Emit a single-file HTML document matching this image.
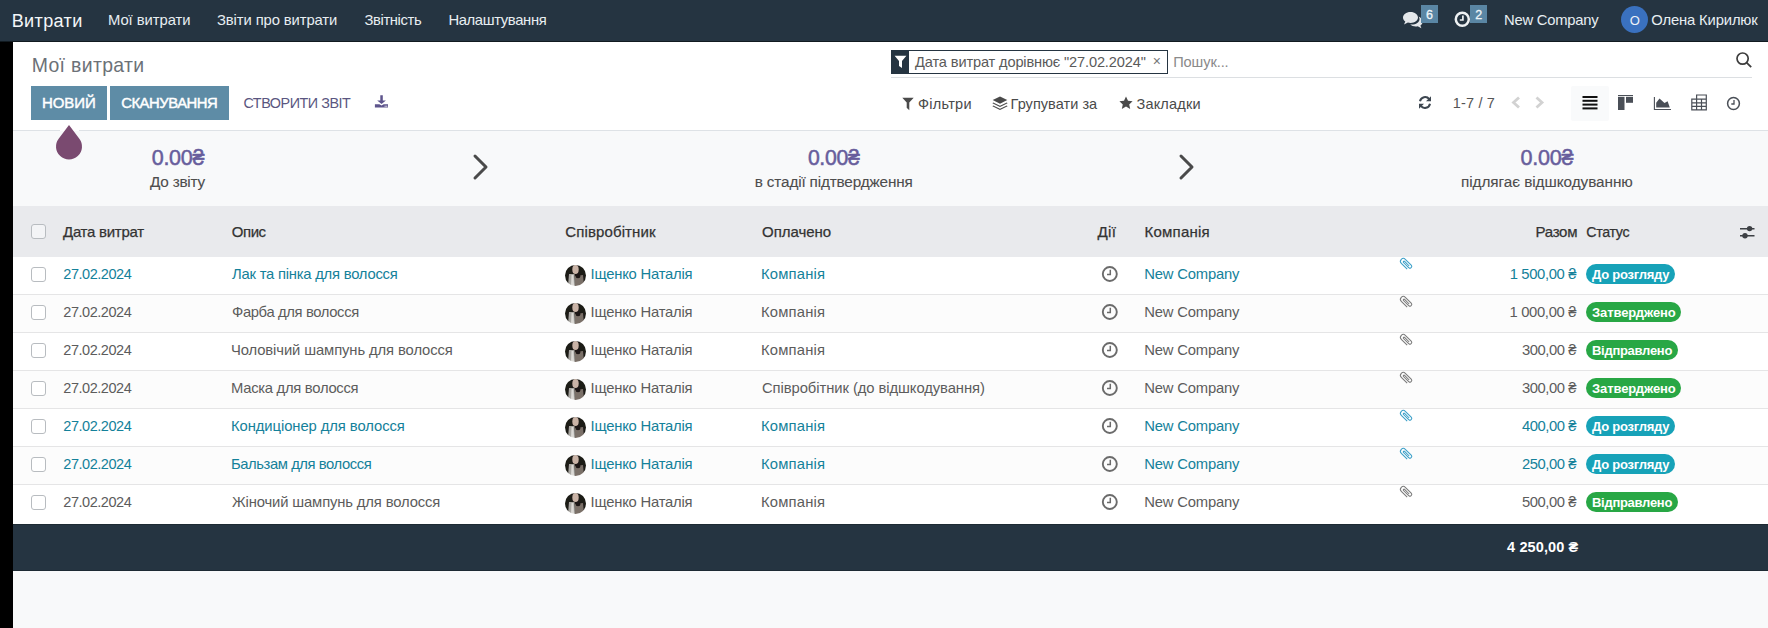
<!DOCTYPE html>
<html><head><meta charset="utf-8">
<style>
*{box-sizing:border-box;margin:0;padding:0}
html,body{width:1768px;height:628px;overflow:hidden;background:#000;font-family:"Liberation Sans",sans-serif;position:relative}
.a{position:absolute;white-space:nowrap;line-height:1}
.ctr{text-align:center}
.ic{position:absolute;overflow:visible}
#nav{position:absolute;left:0;top:0;width:1768px;height:42px;background:#253441}
#main{position:absolute;left:13px;top:42px;width:1755px;height:586px;background:#fff}
.nv{color:#e8eef2;font-size:14.3px}
.nb{position:absolute;top:5px;width:17px;height:18px;background:#5a86a4}
.btn{position:absolute;background:#5e8ca6}
.hd{color:#333;-webkit-text-stroke:0.25px #333}
.cell{color:#5c5c5c}
.lnk{color:#14819a}
.badge{position:absolute;height:20px;border-radius:10px;left:1586px}
.bi{background:#17a2b8}
.bs{background:#28a745}
.cb{position:absolute;left:31px;width:15px;height:15px;border:1px solid #b8bcc0;border-radius:3px;background:#fff}
.row{position:absolute;left:13px;width:1755px;height:38px;border-bottom:1px solid #e5e5e6;background:#fff}
.row.odd{background:#fcfcfc}
.av{position:absolute;left:565px;width:21px;height:21px;border-radius:50%;background:radial-gradient(circle at 45% 55%,#bdb7ae 0,#8f8a84 30%,#3a3330 60%,#1a1614 100%)}

</style></head><body>
<div id="nav"></div><div style="position:absolute;left:0;top:41px;width:1768px;height:1px;background:#111a20"></div>
<span class="a " style="left:11.7px;top:11.8px;font-size:18.07px;letter-spacing:0.354px;color:#f4f6f8">Витрати</span>
<span class="a nv" style="left:108px;top:12.8px;font-size:14.8px;letter-spacing:-0.056px;">Мої витрати</span>
<span class="a nv" style="left:217px;top:12.8px;font-size:14.8px;letter-spacing:-0.102px;">Звіти про витрати</span>
<span class="a nv" style="left:364.5px;top:12.8px;font-size:14.8px;letter-spacing:-0.387px;">Звітність</span>
<span class="a nv" style="left:448.4px;top:12.8px;font-size:14.8px;letter-spacing:-0.36px;">Налаштування</span>
<svg class="ic" style="left:1402px;top:11px" width="21" height="18" viewBox="0 0 21 18">
<path d="M8.5 1C4.1 1 1 3.5 1 6.6c0 1.6.9 3 2.3 4L2 13.6l3.9-2c.8.2 1.7.4 2.6.4 4.4 0 7.5-2.5 7.5-5.4S12.9 1 8.5 1z" fill="#e4e7ea"/>
<path d="M16.6 5.6c.6.7.9 1.5.9 2.4 0 3.2-3.4 5.6-7.8 5.6-.5 0-1 0-1.5-.1 1.3 1.2 3.3 2 5.5 2 .7 0 1.4-.1 2-.3l3.7 2-1-2.7c1.4-1 2.3-2.3 2.3-3.8 0-2-1.6-3.8-4.1-5.1z" fill="#e4e7ea"/>
</svg>
<div class="nb" style="left:1421px"></div>
<span class="a " style="left:1425.95px;top:9.1px;font-size:12.5px;color:#eef4f8;-webkit-text-stroke:0.3px #eef4f8">6</span>
<svg class="ic" style="left:1454px;top:10px" width="17" height="18" viewBox="0 0 17 18">
<circle cx="8.3" cy="9.3" r="6.5" fill="none" stroke="#eef1f3" stroke-width="2.5"/>
<path d="M8.9 5.5v4.5H5.8" fill="none" stroke="#eef1f3" stroke-width="1.7"/>
</svg>
<div class="nb" style="left:1470px"></div>
<span class="a " style="left:1475.3px;top:9.1px;font-size:12.5px;color:#eef4f8;-webkit-text-stroke:0.3px #eef4f8">2</span>
<span class="a nv" style="left:1504px;top:12.7px;font-size:14.8px;letter-spacing:-0.244px;">New Company</span>
<div style="position:absolute;left:1621px;top:6px;width:27px;height:27px;border-radius:50%;background:#3a71bf"></div>
<span class="a " style="left:1629.75px;top:13.7px;font-size:13px;color:#eef3f8">О</span>
<span class="a nv" style="left:1651.3px;top:12.7px;font-size:14.8px;letter-spacing:-0.152px;">Олена Кирилюк</span>
<div id="main"></div>
<span class="a " style="left:31.7px;top:56px;font-size:19.42px;letter-spacing:0.356px;color:#6c7177">Мої витрати</span>
<div style="position:absolute;left:891px;top:50px;width:277px;height:24px;border:1px solid #253441;background:#fff"></div>
<div style="position:absolute;left:891px;top:50px;width:18px;height:24px;background:#253441"></div>
<svg class="ic" style="left:894px;top:55px" width="13" height="14" viewBox="0 0 13 14">
<path d="M0.6 0.8h11.8L8 6v7L5 11V6z" fill="#fff"/></svg>
<span class="a " style="left:915.1px;top:54.9px;font-size:14.6px;letter-spacing:-0.14px;color:#5a5a5a">Дата витрат дорівнює "27.02.2024"</span>
<span class="a " style="left:1152.7px;top:54px;font-size:14px;color:#777">×</span>
<span class="a " style="left:1173.2px;top:54.9px;font-size:14.6px;letter-spacing:-0.101px;color:#8a8a8a">Пошук...</span>
<div style="position:absolute;left:891px;top:77px;width:861px;height:1px;background:#dcdfe2"></div>
<svg class="ic" style="left:1735px;top:51px" width="18" height="18" viewBox="0 0 18 18">
<circle cx="7.6" cy="7.6" r="5.6" fill="none" stroke="#3d3d3d" stroke-width="1.7"/>
<path d="M11.6 11.6l4.6 4.6" stroke="#3d3d3d" stroke-width="1.8"/></svg>
<div class="btn" style="left:31px;top:86px;width:76px;height:34px"></div>
<span class="a " style="left:42px;top:95px;font-size:15px;letter-spacing:-0.072px;color:#fff;-webkit-text-stroke:0.45px #fff">НОВИЙ</span>
<div class="btn" style="left:110px;top:86px;width:119px;height:34px"></div>
<span class="a " style="left:121.2px;top:96px;font-size:14.83px;letter-spacing:-0.463px;color:#fff;-webkit-text-stroke:0.45px #fff">СКАНУВАННЯ</span>
<span class="a " style="left:243.4px;top:96px;font-size:14.36px;letter-spacing:-0.455px;color:#5a5680">СТВОРИТИ ЗВІТ</span>
<svg class="ic" style="left:374px;top:94px" width="15" height="14" viewBox="0 0 15 14">
<path d="M6.3 1.2h2.5v5.2h3.1L7.55 10.1 3.2 6.4h3.1z" fill="#5d548c"/>
<path d="M0.9 10.2H5.4L7.55 11.4 9.7 10.2H14V13.4H0.9z" fill="#5d548c"/>
<rect x="10.6" y="11.7" width="1.1" height="1" fill="#fff"/><rect x="12.2" y="11.7" width="1.1" height="1" fill="#fff"/></svg>
<svg class="ic" style="left:902px;top:97px" width="12" height="14" viewBox="0 0 12 14">
<path d="M0.3 0.8h11.4L7.3 5.6v7.6L4.7 10.8V5.6z" fill="#4a4a4a"/></svg>
<span class="a " style="left:918px;top:96.5px;font-size:14.5px;letter-spacing:0.261px;color:#4a4a4a">Фільтри</span>
<svg class="ic" style="left:992px;top:96px" width="16" height="15" viewBox="0 0 16 15">
<path d="M8 0.5l7.3 3.6L8 7.7 0.7 4.1z" fill="#4a4a4a"/>
<path d="M1.2 6.4L8 9.8l6.8-3.4 0.8 0.9L8 11.1 0.4 7.3z" fill="#4a4a4a"/>
<path d="M1.2 9.4L8 12.8l6.8-3.4 0.8 0.9L8 14.1 0.4 10.3z" fill="#4a4a4a"/></svg>
<span class="a " style="left:1010.6px;top:96.5px;font-size:14.5px;letter-spacing:0.046px;color:#4a4a4a">Групувати за</span>
<svg class="ic" style="left:1119px;top:96px" width="14" height="14" viewBox="0 0 14 14">
<path d="M7 0.5l2 4.3 4.6.5-3.4 3.1 1 4.6L7 10.6 2.8 13l1-4.6L0.4 5.3 5 4.8z" fill="#4a4a4a"/></svg>
<span class="a " style="left:1136.5px;top:96.5px;font-size:14.5px;letter-spacing:0.177px;color:#4a4a4a">Закладки</span>
<svg class="ic" style="left:1418px;top:95px" width="14" height="15" viewBox="0 0 14 15">
<path d="M2 6.3A5.2 5.2 0 0 1 11.2 4.1" fill="none" stroke="#3d4650" stroke-width="2"/>
<path d="M13 1.2v5h-5z" fill="#3d4650"/>
<path d="M12 8.7A5.2 5.2 0 0 1 2.8 10.9" fill="none" stroke="#3d4650" stroke-width="2"/>
<path d="M1 13.8v-5h5z" fill="#3d4650"/></svg>
<span class="a " style="left:1452.7px;top:95.7px;font-size:14.5px;letter-spacing:0.176px;color:#555">1-7 / 7</span>
<svg class="ic" style="left:1510px;top:96px" width="36" height="13" viewBox="0 0 36 13">
<path d="M9 1.5L3.5 6.5 9 11.5" fill="none" stroke="#d2d2d2" stroke-width="2.8"/>
<path d="M26.5 1.5L32 6.5 26.5 11.5" fill="none" stroke="#d2d2d2" stroke-width="2.8"/></svg>
<div style="position:absolute;left:1571px;top:86px;width:38px;height:35px;background:#f9fafb;border-radius:2px"></div>
<svg class="ic" style="left:1582px;top:95px" width="16" height="15" viewBox="0 0 16 15">
<rect x="0.5" y="1" width="15" height="2" fill="#111"/><rect x="0.5" y="4.8" width="15" height="2" fill="#111"/>
<rect x="0.5" y="8.6" width="15" height="2" fill="#111"/><rect x="0.5" y="12.4" width="15" height="2" fill="#111"/></svg>
<svg class="ic" style="left:1617px;top:94px" width="17" height="17" viewBox="0 0 17 17">
<rect x="1" y="1" width="15" height="1" fill="#4a4f57"/><rect x="1" y="2.8" width="6.5" height="13.2" fill="#4a4f57"/>
<rect x="9" y="2.8" width="7" height="6" fill="#4a4f57"/></svg>
<svg class="ic" style="left:1653px;top:96px" width="19" height="15" viewBox="0 0 19 15">
<path d="M1.4 1V13.5H18" fill="none" stroke="#4a4f57" stroke-width="1.1"/>
<path d="M3.2 11.6V6.8L6.5 2.4 11.5 7.1 14.6 5.2 16.8 11.6z" fill="#4a4f57"/></svg>
<svg class="ic" style="left:1691px;top:94px" width="17" height="17" viewBox="0 0 17 17">
<path d="M5.6 5.2V1H15.3V5.2M0.8 5.2H15.3V15.8H0.8zM0.8 8.8H15.3M0.8 12.3H15.3M5.6 5.2V15.8M10.5 5.2V15.8" fill="none" stroke="#4a4f57" stroke-width="1.2"/></svg>
<svg class="ic" style="left:1726px;top:96px" width="15" height="15" viewBox="0 0 15 15">
<circle cx="7.5" cy="7.5" r="5.9" fill="none" stroke="#4a4f57" stroke-width="1.5"/>
<path d="M8 4v4H5.3" fill="none" stroke="#4a4f57" stroke-width="1.3"/></svg>
<div style="position:absolute;left:13px;top:130px;width:1755px;height:1px;background:#dee2e6"></div>
<div style="position:absolute;left:13px;top:131px;width:1755px;height:75px;background:#f8f9fa"></div>
<div style="position:absolute;left:60px;top:130px;width:19px;height:1px;background:#fff"></div>
<svg class="ic" style="left:55px;top:124px" width="28" height="37" viewBox="0 0 28 37">
<path d="M14 1L24.35 14.64A13 13 0 1 1 3.65 14.64Z" fill="#7a4a70"/></svg>
<span class="a " style="left:151.7px;top:148.2px;font-size:21.53px;letter-spacing:-0.269px;color:#675d9c;-webkit-text-stroke:0.5px #675d9c">0.00₴</span>
<span class="a " style="left:807.9px;top:147.2px;font-size:21.21px;letter-spacing:-0.317px;color:#675d9c;-webkit-text-stroke:0.5px #675d9c">0.00₴</span>
<span class="a " style="left:1520.6px;top:147.2px;font-size:21.57px;letter-spacing:-0.267px;color:#675d9c;-webkit-text-stroke:0.5px #675d9c">0.00₴</span>
<span class="a " style="left:150px;top:174px;font-size:15.3px;letter-spacing:-0.215px;color:#4d4d4d;-webkit-text-stroke:0.1px #4d4d4d">До звіту</span>
<span class="a " style="left:754.8px;top:174px;font-size:15.3px;letter-spacing:-0.156px;color:#4d4d4d;-webkit-text-stroke:0.1px #4d4d4d">в стадії підтвердження</span>
<span class="a " style="left:1461px;top:174px;font-size:15.3px;letter-spacing:-0.048px;color:#4d4d4d;-webkit-text-stroke:0.1px #4d4d4d">підлягає відшкодуванню</span>
<svg class="ic" style="left:473px;top:154px" width="16" height="26" viewBox="0 0 16 26">
<path d="M2 2L13 13 2 24" fill="none" stroke="#4a4a4a" stroke-width="3" stroke-linecap="round" stroke-linejoin="round"/></svg>
<svg class="ic" style="left:1179px;top:154px" width="16" height="26" viewBox="0 0 16 26">
<path d="M2 2L13 13 2 24" fill="none" stroke="#4a4a4a" stroke-width="3" stroke-linecap="round" stroke-linejoin="round"/></svg>
<div style="position:absolute;left:13px;top:206px;width:1755px;height:51px;background:#e9eaed"></div>
<div class="cb" style="top:224px;background:#f3f4f6"></div>
<span class="a hd" style="left:63px;top:224px;font-size:15px;letter-spacing:-0.276px;">Дата витрат</span>
<span class="a hd" style="left:231.8px;top:224px;font-size:14.98px;letter-spacing:-0.437px;">Опис</span>
<span class="a hd" style="left:565.3px;top:224px;font-size:15px;letter-spacing:0.118px;">Співробітник</span>
<span class="a hd" style="left:762.1px;top:224px;font-size:15px;letter-spacing:-0.042px;">Оплачено</span>
<span class="a hd" style="left:1097.5px;top:224px;font-size:15.16px;letter-spacing:0.334px;">Дії</span>
<span class="a hd" style="left:1144.6px;top:224px;font-size:15px;letter-spacing:0.204px;">Компанія</span>
<span class="a hd" style="left:1535.5px;top:224px;font-size:15px;letter-spacing:-0.258px;">Разом</span>
<span class="a hd" style="left:1586.2px;top:225px;font-size:14.23px;letter-spacing:-0.328px;">Статус</span>
<svg class="ic" style="left:1739px;top:225px" width="16" height="15" viewBox="0 0 16 15">
<path d="M1 3.8h14.5M1 10.8h14.5" stroke="#3d4045" stroke-width="1.4"/>
<circle cx="10.6" cy="3.6" r="2.7" fill="#3d4045"/><circle cx="6" cy="10.8" r="2.7" fill="#3d4045"/></svg>
<div class="row" style="top:257px;"></div>
<div class="cb" style="top:267px"></div>
<span class="a cell lnk" style="left:63.3px;top:267px;font-size:14.51px;letter-spacing:-0.456px;">27.02.2024</span>
<span class="a cell lnk" style="left:232px;top:267px;font-size:14.8px;letter-spacing:-0.222px;">Лак та пінка для волосся</span>
<svg class="ic" style="left:565px;top:265px" width="21" height="21" viewBox="0 0 21 21"><defs><filter id="bl0"><feGaussianBlur stdDeviation="0.6"/></filter><clipPath id="cp0"><circle cx="10.5" cy="10.5" r="10.5"/></clipPath></defs>
<g clip-path="url(#cp0)" filter="url(#bl0)"><rect width="21" height="21" fill="#1e1a18"/>
<ellipse cx="10.5" cy="4.5" rx="3.2" ry="4.5" fill="#c9b3a6"/>
<path d="M4 9 L9.5 9 L10 21 L3 21 Z" fill="#a9a7a2"/>
<path d="M6.5 10 L8.5 10 L9 21 L6 21 Z" fill="#dcdad6"/>
<path d="M10 11 L18 10 L19 21 L10 21 Z" fill="#7a7068"/>
<ellipse cx="13" cy="11" rx="2.5" ry="2.2" fill="#1a1514"/>
</g></svg>
<span class="a cell lnk" style="left:590.5px;top:267px;font-size:14.8px;letter-spacing:-0.212px;">Іщенко Наталія</span>
<span class="a cell lnk" style="left:761px;top:267px;font-size:14.8px;letter-spacing:0.183px;">Компанія</span>
<svg class="ic" style="left:1101px;top:265px" width="18" height="18" viewBox="0 0 18 18">
<circle cx="8.8" cy="9" r="7" fill="none" stroke="#6b6b6b" stroke-width="1.9"/>
<path d="M9.3 4.8v4.7H6" fill="none" stroke="#6b6b6b" stroke-width="1.5"/></svg>
<span class="a cell lnk" style="left:1144.3px;top:267px;font-size:14.8px;letter-spacing:-0.194px;">New Company</span>
<svg class="ic" style="left:1399px;top:257px" width="14" height="14" viewBox="0 0 14 14">
<path d="M8.2 12.2L2.3 6.3C1.2 5.2 1.2 3.4 2.3 2.3s2.9-1.1 4 0l5.9 5.9c.7.7.7 1.8 0 2.5s-1.8.7-2.5 0L4.5 5.5c-.3-.3-.3-.8 0-1.1s.8-.3 1.1 0l4.6 4.6" fill="none" stroke="#3a9fc8" stroke-width="1.05"/></svg>
<span class="a cell lnk" style="left:1509.7px;top:267px;font-size:14.8px;letter-spacing:-0.357px;">1 500,00 ₴</span>
<div class="badge bi" style="top:264px;width:89px"></div>
<span class="a " style="left:1592px;top:267.7px;font-size:13px;letter-spacing:-0.229px;font-weight:700;color:#fff">До розгляду</span>
<div class="row odd" style="top:295px;"></div>
<div class="cb" style="top:305px"></div>
<span class="a cell" style="left:63.3px;top:305px;font-size:14.51px;letter-spacing:-0.456px;">27.02.2024</span>
<span class="a cell" style="left:232px;top:305px;font-size:14.8px;letter-spacing:-0.363px;">Фарба для волосся</span>
<svg class="ic" style="left:565px;top:303px" width="21" height="21" viewBox="0 0 21 21"><defs><filter id="bl1"><feGaussianBlur stdDeviation="0.6"/></filter><clipPath id="cp1"><circle cx="10.5" cy="10.5" r="10.5"/></clipPath></defs>
<g clip-path="url(#cp1)" filter="url(#bl1)"><rect width="21" height="21" fill="#1e1a18"/>
<ellipse cx="10.5" cy="4.5" rx="3.2" ry="4.5" fill="#c9b3a6"/>
<path d="M4 9 L9.5 9 L10 21 L3 21 Z" fill="#a9a7a2"/>
<path d="M6.5 10 L8.5 10 L9 21 L6 21 Z" fill="#dcdad6"/>
<path d="M10 11 L18 10 L19 21 L10 21 Z" fill="#7a7068"/>
<ellipse cx="13" cy="11" rx="2.5" ry="2.2" fill="#1a1514"/>
</g></svg>
<span class="a cell" style="left:590.5px;top:305px;font-size:14.8px;letter-spacing:-0.212px;">Іщенко Наталія</span>
<span class="a cell" style="left:761px;top:305px;font-size:14.8px;letter-spacing:0.183px;">Компанія</span>
<svg class="ic" style="left:1101px;top:303px" width="18" height="18" viewBox="0 0 18 18">
<circle cx="8.8" cy="9" r="7" fill="none" stroke="#6b6b6b" stroke-width="1.9"/>
<path d="M9.3 4.8v4.7H6" fill="none" stroke="#6b6b6b" stroke-width="1.5"/></svg>
<span class="a cell" style="left:1144.3px;top:305px;font-size:14.8px;letter-spacing:-0.194px;">New Company</span>
<svg class="ic" style="left:1399px;top:295px" width="14" height="14" viewBox="0 0 14 14">
<path d="M8.2 12.2L2.3 6.3C1.2 5.2 1.2 3.4 2.3 2.3s2.9-1.1 4 0l5.9 5.9c.7.7.7 1.8 0 2.5s-1.8.7-2.5 0L4.5 5.5c-.3-.3-.3-.8 0-1.1s.8-.3 1.1 0l4.6 4.6" fill="none" stroke="#7a7a7a" stroke-width="1.05"/></svg>
<span class="a cell" style="left:1509.5px;top:305px;font-size:14.8px;letter-spacing:-0.334px;">1 000,00 ₴</span>
<div class="badge bs" style="top:302px;width:95px"></div>
<span class="a " style="left:1592px;top:305.7px;font-size:13px;letter-spacing:-0.099px;font-weight:700;color:#fff">Затверджено</span>
<div class="row" style="top:333px;"></div>
<div class="cb" style="top:343px"></div>
<span class="a cell" style="left:63.3px;top:343px;font-size:14.51px;letter-spacing:-0.456px;">27.02.2024</span>
<span class="a cell" style="left:231px;top:343px;font-size:14.8px;letter-spacing:-0.107px;">Чоловічий шампунь для волосся</span>
<svg class="ic" style="left:565px;top:341px" width="21" height="21" viewBox="0 0 21 21"><defs><filter id="bl2"><feGaussianBlur stdDeviation="0.6"/></filter><clipPath id="cp2"><circle cx="10.5" cy="10.5" r="10.5"/></clipPath></defs>
<g clip-path="url(#cp2)" filter="url(#bl2)"><rect width="21" height="21" fill="#1e1a18"/>
<ellipse cx="10.5" cy="4.5" rx="3.2" ry="4.5" fill="#c9b3a6"/>
<path d="M4 9 L9.5 9 L10 21 L3 21 Z" fill="#a9a7a2"/>
<path d="M6.5 10 L8.5 10 L9 21 L6 21 Z" fill="#dcdad6"/>
<path d="M10 11 L18 10 L19 21 L10 21 Z" fill="#7a7068"/>
<ellipse cx="13" cy="11" rx="2.5" ry="2.2" fill="#1a1514"/>
</g></svg>
<span class="a cell" style="left:590.5px;top:343px;font-size:14.8px;letter-spacing:-0.212px;">Іщенко Наталія</span>
<span class="a cell" style="left:761px;top:343px;font-size:14.8px;letter-spacing:0.183px;">Компанія</span>
<svg class="ic" style="left:1101px;top:341px" width="18" height="18" viewBox="0 0 18 18">
<circle cx="8.8" cy="9" r="7" fill="none" stroke="#6b6b6b" stroke-width="1.9"/>
<path d="M9.3 4.8v4.7H6" fill="none" stroke="#6b6b6b" stroke-width="1.5"/></svg>
<span class="a cell" style="left:1144.3px;top:343px;font-size:14.8px;letter-spacing:-0.194px;">New Company</span>
<svg class="ic" style="left:1399px;top:333px" width="14" height="14" viewBox="0 0 14 14">
<path d="M8.2 12.2L2.3 6.3C1.2 5.2 1.2 3.4 2.3 2.3s2.9-1.1 4 0l5.9 5.9c.7.7.7 1.8 0 2.5s-1.8.7-2.5 0L4.5 5.5c-.3-.3-.3-.8 0-1.1s.8-.3 1.1 0l4.6 4.6" fill="none" stroke="#7a7a7a" stroke-width="1.05"/></svg>
<span class="a cell" style="left:1522px;top:343px;font-size:14.79px;letter-spacing:-0.445px;">300,00 ₴</span>
<div class="badge bs" style="top:340px;width:91.5px"></div>
<span class="a " style="left:1592px;top:343.7px;font-size:13px;letter-spacing:-0.286px;font-weight:700;color:#fff">Відправлено</span>
<div class="row odd" style="top:371px;"></div>
<div class="cb" style="top:381px"></div>
<span class="a cell" style="left:63.3px;top:381px;font-size:14.51px;letter-spacing:-0.456px;">27.02.2024</span>
<span class="a cell" style="left:231px;top:381px;font-size:14.8px;letter-spacing:-0.28px;">Маска для волосся</span>
<svg class="ic" style="left:565px;top:379px" width="21" height="21" viewBox="0 0 21 21"><defs><filter id="bl3"><feGaussianBlur stdDeviation="0.6"/></filter><clipPath id="cp3"><circle cx="10.5" cy="10.5" r="10.5"/></clipPath></defs>
<g clip-path="url(#cp3)" filter="url(#bl3)"><rect width="21" height="21" fill="#1e1a18"/>
<ellipse cx="10.5" cy="4.5" rx="3.2" ry="4.5" fill="#c9b3a6"/>
<path d="M4 9 L9.5 9 L10 21 L3 21 Z" fill="#a9a7a2"/>
<path d="M6.5 10 L8.5 10 L9 21 L6 21 Z" fill="#dcdad6"/>
<path d="M10 11 L18 10 L19 21 L10 21 Z" fill="#7a7068"/>
<ellipse cx="13" cy="11" rx="2.5" ry="2.2" fill="#1a1514"/>
</g></svg>
<span class="a cell" style="left:590.5px;top:381px;font-size:14.8px;letter-spacing:-0.212px;">Іщенко Наталія</span>
<span class="a cell" style="left:762px;top:381px;font-size:14.8px;letter-spacing:-0.076px;">Співробітник (до відшкодування)</span>
<svg class="ic" style="left:1101px;top:379px" width="18" height="18" viewBox="0 0 18 18">
<circle cx="8.8" cy="9" r="7" fill="none" stroke="#6b6b6b" stroke-width="1.9"/>
<path d="M9.3 4.8v4.7H6" fill="none" stroke="#6b6b6b" stroke-width="1.5"/></svg>
<span class="a cell" style="left:1144.3px;top:381px;font-size:14.8px;letter-spacing:-0.194px;">New Company</span>
<svg class="ic" style="left:1399px;top:371px" width="14" height="14" viewBox="0 0 14 14">
<path d="M8.2 12.2L2.3 6.3C1.2 5.2 1.2 3.4 2.3 2.3s2.9-1.1 4 0l5.9 5.9c.7.7.7 1.8 0 2.5s-1.8.7-2.5 0L4.5 5.5c-.3-.3-.3-.8 0-1.1s.8-.3 1.1 0l4.6 4.6" fill="none" stroke="#7a7a7a" stroke-width="1.05"/></svg>
<span class="a cell" style="left:1522px;top:381px;font-size:14.79px;letter-spacing:-0.445px;">300,00 ₴</span>
<div class="badge bs" style="top:378px;width:95px"></div>
<span class="a " style="left:1592px;top:381.7px;font-size:13px;letter-spacing:-0.099px;font-weight:700;color:#fff">Затверджено</span>
<div class="row" style="top:409px;"></div>
<div class="cb" style="top:419px"></div>
<span class="a cell lnk" style="left:63.3px;top:419px;font-size:14.51px;letter-spacing:-0.456px;">27.02.2024</span>
<span class="a cell lnk" style="left:231px;top:419px;font-size:14.8px;letter-spacing:-0.076px;">Кондиціонер для волосся</span>
<svg class="ic" style="left:565px;top:417px" width="21" height="21" viewBox="0 0 21 21"><defs><filter id="bl4"><feGaussianBlur stdDeviation="0.6"/></filter><clipPath id="cp4"><circle cx="10.5" cy="10.5" r="10.5"/></clipPath></defs>
<g clip-path="url(#cp4)" filter="url(#bl4)"><rect width="21" height="21" fill="#1e1a18"/>
<ellipse cx="10.5" cy="4.5" rx="3.2" ry="4.5" fill="#c9b3a6"/>
<path d="M4 9 L9.5 9 L10 21 L3 21 Z" fill="#a9a7a2"/>
<path d="M6.5 10 L8.5 10 L9 21 L6 21 Z" fill="#dcdad6"/>
<path d="M10 11 L18 10 L19 21 L10 21 Z" fill="#7a7068"/>
<ellipse cx="13" cy="11" rx="2.5" ry="2.2" fill="#1a1514"/>
</g></svg>
<span class="a cell lnk" style="left:590.5px;top:419px;font-size:14.8px;letter-spacing:-0.212px;">Іщенко Наталія</span>
<span class="a cell lnk" style="left:761px;top:419px;font-size:14.8px;letter-spacing:0.183px;">Компанія</span>
<svg class="ic" style="left:1101px;top:417px" width="18" height="18" viewBox="0 0 18 18">
<circle cx="8.8" cy="9" r="7" fill="none" stroke="#6b6b6b" stroke-width="1.9"/>
<path d="M9.3 4.8v4.7H6" fill="none" stroke="#6b6b6b" stroke-width="1.5"/></svg>
<span class="a cell lnk" style="left:1144.3px;top:419px;font-size:14.8px;letter-spacing:-0.194px;">New Company</span>
<svg class="ic" style="left:1399px;top:409px" width="14" height="14" viewBox="0 0 14 14">
<path d="M8.2 12.2L2.3 6.3C1.2 5.2 1.2 3.4 2.3 2.3s2.9-1.1 4 0l5.9 5.9c.7.7.7 1.8 0 2.5s-1.8.7-2.5 0L4.5 5.5c-.3-.3-.3-.8 0-1.1s.8-.3 1.1 0l4.6 4.6" fill="none" stroke="#3a9fc8" stroke-width="1.05"/></svg>
<span class="a cell lnk" style="left:1522px;top:419px;font-size:14.79px;letter-spacing:-0.445px;">400,00 ₴</span>
<div class="badge bi" style="top:416px;width:89px"></div>
<span class="a " style="left:1592px;top:419.7px;font-size:13px;letter-spacing:-0.229px;font-weight:700;color:#fff">До розгляду</span>
<div class="row odd" style="top:447px;"></div>
<div class="cb" style="top:457px"></div>
<span class="a cell lnk" style="left:63.3px;top:457px;font-size:14.51px;letter-spacing:-0.456px;">27.02.2024</span>
<span class="a cell lnk" style="left:231px;top:457px;font-size:14.8px;letter-spacing:-0.428px;">Бальзам для волосся</span>
<svg class="ic" style="left:565px;top:455px" width="21" height="21" viewBox="0 0 21 21"><defs><filter id="bl5"><feGaussianBlur stdDeviation="0.6"/></filter><clipPath id="cp5"><circle cx="10.5" cy="10.5" r="10.5"/></clipPath></defs>
<g clip-path="url(#cp5)" filter="url(#bl5)"><rect width="21" height="21" fill="#1e1a18"/>
<ellipse cx="10.5" cy="4.5" rx="3.2" ry="4.5" fill="#c9b3a6"/>
<path d="M4 9 L9.5 9 L10 21 L3 21 Z" fill="#a9a7a2"/>
<path d="M6.5 10 L8.5 10 L9 21 L6 21 Z" fill="#dcdad6"/>
<path d="M10 11 L18 10 L19 21 L10 21 Z" fill="#7a7068"/>
<ellipse cx="13" cy="11" rx="2.5" ry="2.2" fill="#1a1514"/>
</g></svg>
<span class="a cell lnk" style="left:590.5px;top:457px;font-size:14.8px;letter-spacing:-0.212px;">Іщенко Наталія</span>
<span class="a cell lnk" style="left:761px;top:457px;font-size:14.8px;letter-spacing:0.183px;">Компанія</span>
<svg class="ic" style="left:1101px;top:455px" width="18" height="18" viewBox="0 0 18 18">
<circle cx="8.8" cy="9" r="7" fill="none" stroke="#6b6b6b" stroke-width="1.9"/>
<path d="M9.3 4.8v4.7H6" fill="none" stroke="#6b6b6b" stroke-width="1.5"/></svg>
<span class="a cell lnk" style="left:1144.3px;top:457px;font-size:14.8px;letter-spacing:-0.194px;">New Company</span>
<svg class="ic" style="left:1399px;top:447px" width="14" height="14" viewBox="0 0 14 14">
<path d="M8.2 12.2L2.3 6.3C1.2 5.2 1.2 3.4 2.3 2.3s2.9-1.1 4 0l5.9 5.9c.7.7.7 1.8 0 2.5s-1.8.7-2.5 0L4.5 5.5c-.3-.3-.3-.8 0-1.1s.8-.3 1.1 0l4.6 4.6" fill="none" stroke="#3a9fc8" stroke-width="1.05"/></svg>
<span class="a cell lnk" style="left:1522px;top:457px;font-size:14.79px;letter-spacing:-0.445px;">250,00 ₴</span>
<div class="badge bi" style="top:454px;width:89px"></div>
<span class="a " style="left:1592px;top:457.7px;font-size:13px;letter-spacing:-0.229px;font-weight:700;color:#fff">До розгляду</span>
<div class="row" style="top:485px;border-bottom:0;height:39px"></div>
<div class="cb" style="top:495px"></div>
<span class="a cell" style="left:63.3px;top:495px;font-size:14.51px;letter-spacing:-0.456px;">27.02.2024</span>
<span class="a cell" style="left:232px;top:495px;font-size:14.8px;letter-spacing:-0.137px;">Жіночий шампунь для волосся</span>
<svg class="ic" style="left:565px;top:493px" width="21" height="21" viewBox="0 0 21 21"><defs><filter id="bl6"><feGaussianBlur stdDeviation="0.6"/></filter><clipPath id="cp6"><circle cx="10.5" cy="10.5" r="10.5"/></clipPath></defs>
<g clip-path="url(#cp6)" filter="url(#bl6)"><rect width="21" height="21" fill="#1e1a18"/>
<ellipse cx="10.5" cy="4.5" rx="3.2" ry="4.5" fill="#c9b3a6"/>
<path d="M4 9 L9.5 9 L10 21 L3 21 Z" fill="#a9a7a2"/>
<path d="M6.5 10 L8.5 10 L9 21 L6 21 Z" fill="#dcdad6"/>
<path d="M10 11 L18 10 L19 21 L10 21 Z" fill="#7a7068"/>
<ellipse cx="13" cy="11" rx="2.5" ry="2.2" fill="#1a1514"/>
</g></svg>
<span class="a cell" style="left:590.5px;top:495px;font-size:14.8px;letter-spacing:-0.212px;">Іщенко Наталія</span>
<span class="a cell" style="left:761px;top:495px;font-size:14.8px;letter-spacing:0.183px;">Компанія</span>
<svg class="ic" style="left:1101px;top:493px" width="18" height="18" viewBox="0 0 18 18">
<circle cx="8.8" cy="9" r="7" fill="none" stroke="#6b6b6b" stroke-width="1.9"/>
<path d="M9.3 4.8v4.7H6" fill="none" stroke="#6b6b6b" stroke-width="1.5"/></svg>
<span class="a cell" style="left:1144.3px;top:495px;font-size:14.8px;letter-spacing:-0.194px;">New Company</span>
<svg class="ic" style="left:1399px;top:485px" width="14" height="14" viewBox="0 0 14 14">
<path d="M8.2 12.2L2.3 6.3C1.2 5.2 1.2 3.4 2.3 2.3s2.9-1.1 4 0l5.9 5.9c.7.7.7 1.8 0 2.5s-1.8.7-2.5 0L4.5 5.5c-.3-.3-.3-.8 0-1.1s.8-.3 1.1 0l4.6 4.6" fill="none" stroke="#7a7a7a" stroke-width="1.05"/></svg>
<span class="a cell" style="left:1522px;top:495px;font-size:14.79px;letter-spacing:-0.445px;">500,00 ₴</span>
<div class="badge bs" style="top:492px;width:91.5px"></div>
<span class="a " style="left:1592px;top:495.7px;font-size:13px;letter-spacing:-0.286px;font-weight:700;color:#fff">Відправлено</span>
<div style="position:absolute;left:13px;top:524px;width:1755px;height:47px;background:#253441;border-top:1px solid #1d2a33;border-bottom:1px solid #1d2a33"></div>
<span class="a " style="left:1507.1px;top:539.9px;font-size:14.5px;letter-spacing:0.103px;font-weight:700;color:#fff">4 250,00 ₴</span>
<div style="position:absolute;left:13px;top:571px;width:1755px;height:57px;background:#f8f9fa"></div>
</body></html>
